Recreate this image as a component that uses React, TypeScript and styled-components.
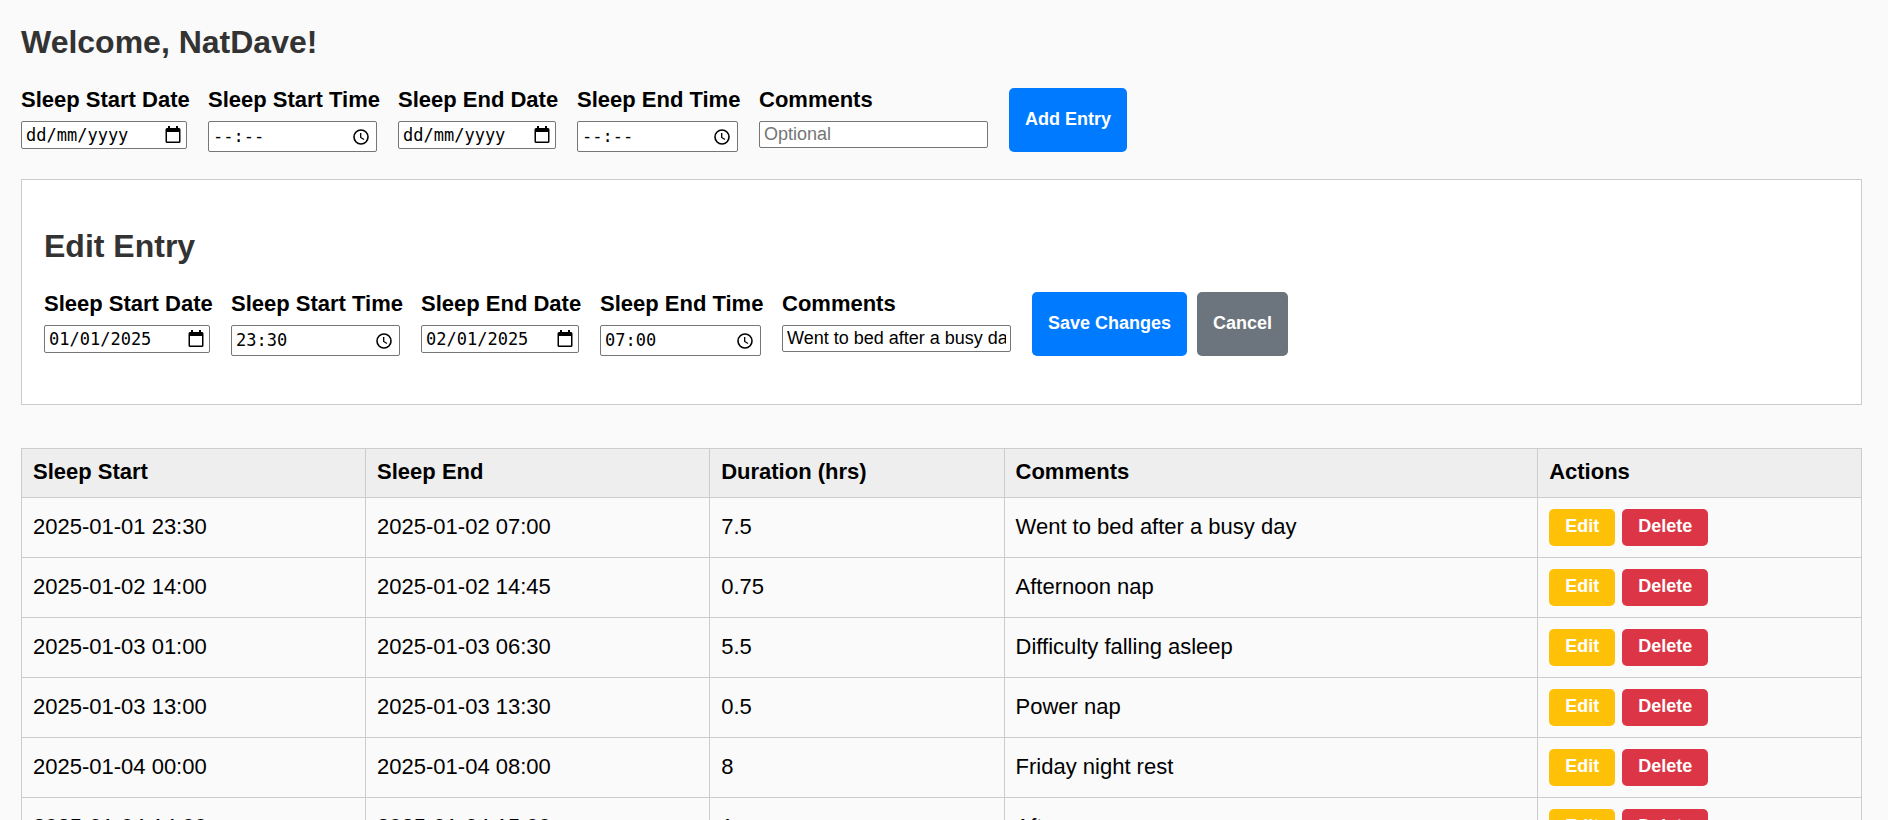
import React, { useId, useState } from "react";
import styled, { createGlobalStyle } from "styled-components";

const GlobalStyle = createGlobalStyle`
  *, *::before, *::after { box-sizing: border-box; }
  body {
    margin: 0;
    background: #fafafa;
    color: #000;
    font-family: Arial, "Liberation Sans", sans-serif;
    font-size: 22px;
    line-height: 24px;
  }
`;

const Page = styled.main`
  padding: 25px 26px 21px 21px;
`;

const Heading = styled.h2`
  margin: 0 0 28px;
  color: #333;
  font-size: 32px;
  line-height: 35px;
`;

const EntryForm = styled.form`
  display: flex;
  flex-wrap: wrap;
  gap: 21px;
  margin-bottom: 27px;
`;

const FieldGroup = styled.div<{ $width: number }>`
  display: flex;
  flex-direction: column;
  width: ${(p) => p.$width}px;
`;

const FieldLabel = styled.label`
  margin-bottom: 9px;
  font-weight: bold;
  white-space: nowrap;
`;

const InputBox = styled.div<{ $height: number }>`
  display: flex;
  align-items: center;
  height: ${(p) => p.$height}px;
  padding: 0 4px;
  border: 1px solid #767676;
  border-radius: 2px;
  background: #fff;
`;

const PickerInput = styled.input`
  flex: 1;
  min-width: 0;
  padding: 0;
  border: 0;
  outline: 0;
  background: none;
  color: #000;
  font: 17px/23px "DejaVu Sans Mono", monospace;

  &::placeholder {
    color: #000;
    opacity: 1;
  }
`;

const PickerButton = styled.button`
  display: flex;
  padding: 0;
  border: 0;
  background: none;
  color: #000;
`;

const CommentInput = styled.input`
  width: 100%;
  height: 27px;
  padding: 0 4px;
  border: 1px solid #767676;
  border-radius: 2px;
  background: #fff;
  color: #000;
  font: 18px/21px Arial, "Liberation Sans", sans-serif;

  &::placeholder {
    color: #757575;
    opacity: 1;
  }
`;

const tones = {
  primary: "#007bff",
  neutral: "#6c757d",
  edit: "#ffc107",
  danger: "#dc3545",
};

const Button = styled.button<{ $tone: keyof typeof tones }>`
  padding: 7px 16px 9px;
  border: 0;
  border-radius: 5px;
  background: ${(p) => tones[p.$tone]};
  color: #fff;
  font: bold 18px/21px Arial, "Liberation Sans", sans-serif;
  cursor: pointer;
`;

const FormActions = styled.div`
  display: flex;
  gap: 10px;
  height: 64px;
`;

const EditPanel = styled.section`
  margin-bottom: 43px;
  padding: 49px 22px 21px;
  border: 1px solid #ccc;
  background: #fff;
`;

const EntryTable = styled.table`
  width: 100%;
  border-collapse: collapse;
  table-layout: fixed;
`;

const HeaderCell = styled.th<{ $share: number }>`
  width: ${(p) => p.$share}%;
  height: 49px;
  padding: 0 11px 2px;
  border: 1px solid #ccc;
  background: #eee;
  text-align: left;
`;

const Cell = styled.td`
  height: 60px;
  padding: 0 11px 2px;
  border: 1px solid #ccc;
`;

const ActionCell = styled(Cell)`
  padding-bottom: 0;
`;

const RowActions = styled.div`
  display: flex;
  gap: 7px;
`;

const CalendarIcon = () => (
  <svg width="18" height="18" viewBox="0 0 18 18" aria-hidden="true">
    <path
      fill="currentColor"
      fillRule="evenodd"
      d="M4 0h2v2h6V0h2v2h1a1.500 1.500 0 0 1 1.500 1.500v12a1.500 1.500 0 0 1-1.500 1.500H3a1.500 1.500 0 0 1-1.500-1.500v-12A1.500 1.500 0 0 1 3 2h1zM3 6v9.500h12V6z"
    />
  </svg>
);

const ClockIcon = () => (
  <svg width="20" height="18" viewBox="0 0 20 18" aria-hidden="true" fill="none" stroke="currentColor">
    <circle cx="9" cy="9" r="7" strokeWidth="1.600" />
    <path d="M8.700 5v4.500l3.300 2" strokeWidth="1.300" />
  </svg>
);

type PickerProps = {
  label: string;
  kind: "date" | "time";
  width: number;
  initial?: string;
};

function PickerField({ label, kind, width, initial = "" }: PickerProps) {
  const id = useId();
  const [value, setValue] = useState(initial);
  const isDate = kind === "date";
  return (
    <FieldGroup $width={width}>
      <FieldLabel htmlFor={id}>{label}</FieldLabel>
      <InputBox $height={isDate ? 28 : 31}>
        <PickerInput
          id={id}
          type="text"
          placeholder={isDate ? "dd/mm/yyyy" : "--:--"}
          value={value}
          onChange={(e) => setValue(e.target.value)}
        />
        <PickerButton type="button" aria-label={`Choose ${label}`}>
          {isDate ? <CalendarIcon /> : <ClockIcon />}
        </PickerButton>
      </InputBox>
    </FieldGroup>
  );
}

function CommentField({ initial = "", placeholder }: { initial?: string; placeholder?: string }) {
  const id = useId();
  const [value, setValue] = useState(initial);
  return (
    <FieldGroup $width={229}>
      <FieldLabel htmlFor={id}>Comments</FieldLabel>
      <CommentInput
        id={id}
        type="text"
        placeholder={placeholder}
        value={value}
        onChange={(e) => setValue(e.target.value)}
      />
    </FieldGroup>
  );
}

type Draft = { startDate?: string; startTime?: string; endDate?: string; endTime?: string };

function SleepFields({ startDate, startTime, endDate, endTime }: Draft) {
  return (
    <>
      <PickerField label="Sleep Start Date" kind="date" width={166} initial={startDate} />
      <PickerField label="Sleep Start Time" kind="time" width={169} initial={startTime} />
      <PickerField label="Sleep End Date" kind="date" width={158} initial={endDate} />
      <PickerField label="Sleep End Time" kind="time" width={161} initial={endTime} />
    </>
  );
}

const columns = [
  { title: "Sleep Start", share: 18.7 },
  { title: "Sleep End", share: 18.7 },
  { title: "Duration (hrs)", share: 16 },
  { title: "Comments", share: 29 },
  { title: "Actions", share: 17.6 },
];

const entries = [
  ["2025-01-01 23:30", "2025-01-02 07:00", "7.5", "Went to bed after a busy day"],
  ["2025-01-02 14:00", "2025-01-02 14:45", "0.75", "Afternoon nap"],
  ["2025-01-03 01:00", "2025-01-03 06:30", "5.5", "Difficulty falling asleep"],
  ["2025-01-03 13:00", "2025-01-03 13:30", "0.5", "Power nap"],
  ["2025-01-04 00:00", "2025-01-04 08:00", "8", "Friday night rest"],
  ["2025-01-04 14:00", "2025-01-04 15:00", "1", "Afternoon nap"],
];

export default function App() {
  const keepPage = (e: React.FormEvent) => e.preventDefault();
  return (
    <Page>
      <GlobalStyle />
      <Heading>Welcome, NatDave!</Heading>
      <EntryForm onSubmit={keepPage}>
        <SleepFields />
        <CommentField placeholder="Optional" />
        <FormActions>
          <Button $tone="primary">Add Entry</Button>
        </FormActions>
      </EntryForm>

      <EditPanel>
        <Heading>Edit Entry</Heading>
        <EntryForm onSubmit={keepPage}>
          <SleepFields startDate="01/01/2025" startTime="23:30" endDate="02/01/2025" endTime="07:00" />
          <CommentField initial="Went to bed after a busy day" />
          <FormActions>
            <Button $tone="primary">Save Changes</Button>
            <Button $tone="neutral" type="button">Cancel</Button>
          </FormActions>
        </EntryForm>
      </EditPanel>

      <EntryTable>
        <thead>
          <tr>
            {columns.map((c) => (
              <HeaderCell key={c.title} $share={c.share} scope="col">{c.title}</HeaderCell>
            ))}
          </tr>
        </thead>
        <tbody>
          {entries.map((entry) => (
            <tr key={entry[0]}>
              {entry.map((text, i) => (
                <Cell key={i}>{text}</Cell>
              ))}
              <ActionCell>
                <RowActions>
                  <Button $tone="edit">Edit</Button>
                  <Button $tone="danger">Delete</Button>
                </RowActions>
              </ActionCell>
            </tr>
          ))}
        </tbody>
      </EntryTable>
    </Page>
  );
}
